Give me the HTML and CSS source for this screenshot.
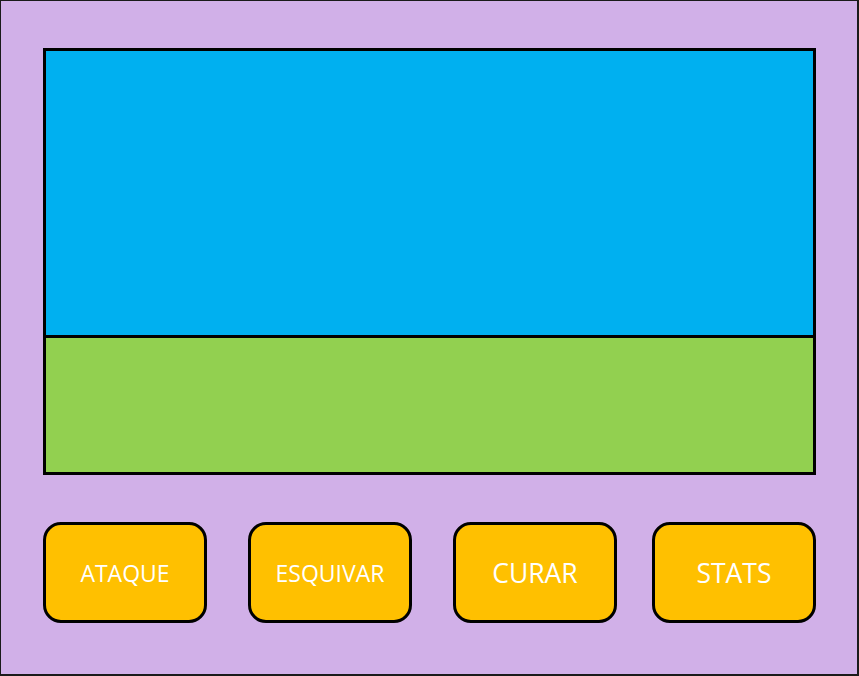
FILE: index.html
```html
<!DOCTYPE html>
<html>
<head>
<meta charset="utf-8">
<link rel="stylesheet" href="styles.css">
</head>
<body>
<div class="frame">
  <div class="screen">
    <div class="sky"></div>
    <div class="ground"></div>
  </div>
  <div class="actions">
    <div class="group">
      <button class="btn small">ATAQUE</button>
      <button class="btn small">ESQUIVAR</button>
      <button class="btn large">CURAR</button>
    </div>
    <button class="btn large">STATS</button>
  </div>
</div>
</body>
</html>
```
FILE: styles.css
```css
html, body {
  margin: 0;
  padding: 0;
}
.frame {
  box-sizing: border-box;
  width: 859px;
  height: 676px;
  background: #d1b0e8;
  border-style: solid;
  border-color: #1a1a1a;
  border-width: 1px 2px 2px 1px;
  padding: 47px 41px 0 42px;
  display: flex;
  flex-direction: column;
}
.screen {
  box-sizing: border-box;
  width: 773px;
  height: 427px;
  border: 3px solid #000;
  display: flex;
  flex-direction: column;
}
.sky {
  height: 284px;
  background: #00b0f0;
  border-bottom: 3px solid #000;
}
.ground {
  flex: 1;
  background: #92d050;
}
.actions {
  margin-top: 47px;
  width: 773px;
  display: flex;
  justify-content: space-between;
}
.group {
  display: flex;
  gap: 41px;
}
.btn {
  box-sizing: border-box;
  flex-shrink: 0;
  width: 164px;
  height: 101px;
  background: #ffc000;
  border: 3.5px solid #000;
  border-radius: 18px;
  color: #fff;
  font-family: "Open Sans", sans-serif;
  padding: 0;
  display: flex;
  align-items: center;
  justify-content: center;
}
.btn.small {
  font-size: 23px;
}
.btn.large {
  font-size: 26.5px;
}
```
